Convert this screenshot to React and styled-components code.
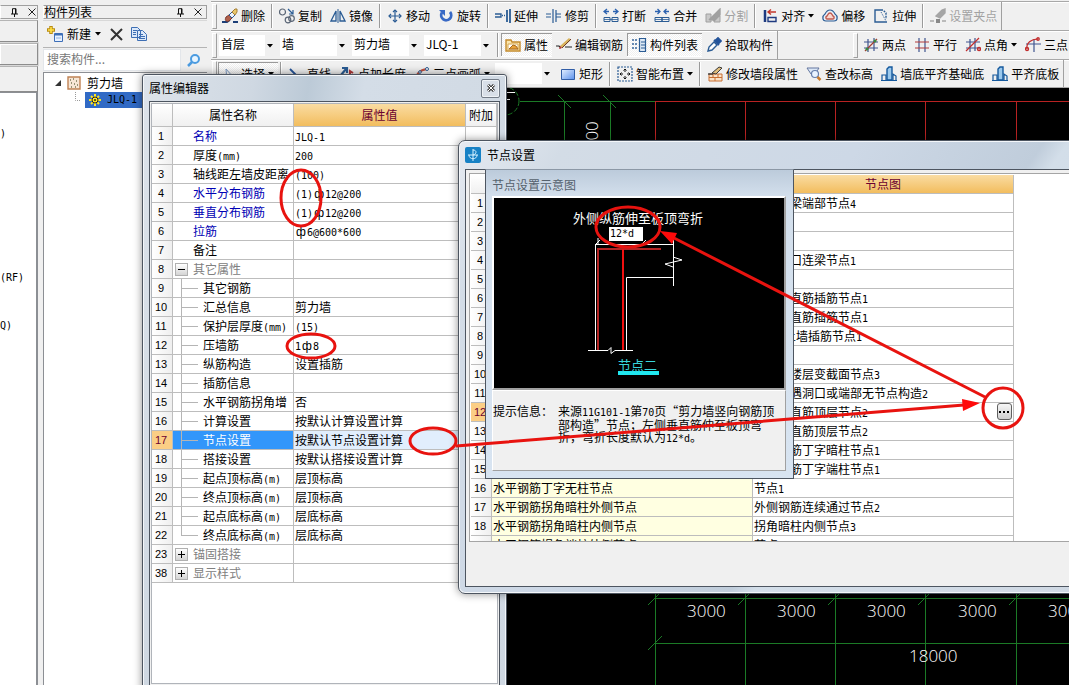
import React from "react";
import styled, { createGlobalStyle, css } from "styled-components";

const ui = '"Noto Sans CJK SC", "Liberation Sans", sans-serif';

const GlobalStyle = createGlobalStyle`
  * { box-sizing: border-box; }
  body { margin: 0; background: #f0f0f0; font: 12px/18px ${ui}; color: #000; text-spacing-trim: space-all; overflow: hidden; }
  button, input, select { font: inherit; color: inherit; }
  svg { display: block; flex: none; }
`;

/* ---------- shell ---------- */
const Shell = styled.div`
  position: relative;
  display: flex;
  height: 100vh;
  overflow: hidden;
  background: #f0f0f0;
`;
const Dock = styled.aside`
  display: flex;
  flex-direction: column;
  width: ${(p) => p.$width}px;
  flex: none;
  padding-top: 5px;
  margin-right: ${(p) => p.$gap}px;
`;
const DockTitle = styled.div`
  display: flex;
  align-items: center;
  height: 14px;
  padding-right: 4px;
  gap: 9px;
  border: 1px solid #a0a0a0;
  border-left-color: #fff;
  line-height: 12px;
`;
const DockName = styled.h2`
  flex: 1;
  margin: 0;
  font: inherit;
  white-space: nowrap;
`;
const GlyphButton = styled.button`
  display: block;
  padding: 0;
  border: 0;
  background: none;
`;
const Slot = styled.div`
  height: ${(p) => p.$height}px;
  border: 1px solid #8c8c8c;
  border-left: 0;
  border-top-color: #b4b4b4;
  margin-top: 1px;
  background: ${(p) => (p.$raised ? "#ececec" : "#f0f0f0")};
  ${(p) => p.$raised && css`box-shadow: inset 1px 1px #fff, 0 0 0 1px #d8d8d8;`}
`;
const SideList = styled.div`
  flex: 1;
  display: flex;
  flex-direction: column;
  background: #fff;
  border-right: 2px solid #8c8f94;
  border-top: 1px solid #8c8f94;
  padding-top: 32px;
  font: 10px/18px "DejaVu Sans Mono", monospace;
`;
const SideItem = styled.span`
  height: 18px;
  margin-bottom: ${(p) => p.$after}px;
  white-space: nowrap;
`;
const ListTools = styled.div`
  display: flex;
  align-items: center;
  height: 27px;
  margin-top: 1px;
  padding-left: 4px;
  border-top: 1px solid #d8d8d8;
`;
const PlainButton = styled.button`
  display: flex;
  align-items: center;
  gap: 4px;
  padding: 0;
  margin-right: ${(p) => p.$after || 0}px;
  border: 0;
  background: none;
  white-space: nowrap;
`;
const SearchBar = styled.div`
  display: flex;
  align-items: center;
  height: 25px;
  border-top: 1px solid #b4b4b4;
  gap: 5px;
`;
const SearchInput = styled.input`
  flex: 1;
  min-width: 0;
  height: 22px;
  padding: 0 3px 3px;
  border: 1px solid #e3e6ea;
  background: #fff;
  &::placeholder { color: #777; opacity: 1; }
`;
const Tree = styled.ul`
  flex: 1;
  margin: 0;
  padding: 1px 0 0;
  list-style: none;
  background: #fff;
  border: 1px solid #8c8f94;
  border-width: 1px 0 0 1px;
`;
const TreeRow = styled.li`
  display: flex;
  align-items: center;
  height: 17px;
  gap: 5px;
  padding-left: ${(p) => p.$indent}px;
`;
const TreeLabel = styled.span`
  display: flex;
  flex: 1;
  align-items: center;
  gap: 6px;
  height: 16px;
  padding-left: ${(p) => (p.$selected ? 4 : 0)}px;
  background: ${(p) => (p.$selected ? "#316ac5" : "none")};
`;

/* ---------- toolbars ---------- */
const Main = styled.main`
  flex: 1;
  min-width: 0;
  display: flex;
  flex-direction: column;
`;
const Strips = styled.div`
  border-top: 1px solid #a8a8a8;
  margin-top: 1px;
  background: #f0f0f0;
`;
const Strip = styled.div`
  display: flex;
  height: 29px;
  border-bottom: 1px solid #a8a8a8;
  box-shadow: inset 0 1px #fff;
  overflow: hidden;
  &:last-child { height: 28px; }
`;
const Bar = styled.div`
  display: flex;
  align-items: center;
  flex: none;
  margin-left: ${(p) => p.$offset || 0}px;
  border-right: 1px solid #a0a0a0;
  &::before {
    content: "";
    width: 3px;
    height: 23px;
    margin: 0 1px;
    border: 1px solid #a0a0a0;
    border-left-color: #fff;
    border-top-color: #fff;
  }
`;
const Tool = styled.button`
  display: flex;
  align-items: center;
  gap: 3px;
  height: 24px;
  padding: 0 4px;
  border: 1px solid transparent;
  border-width: 1px 0;
  white-space: nowrap;
  background: none;
  ${(p) => p.$pressed && css`
    border-color: #9a9a9a #fff #fff;
    box-shadow: inset 1px 0 #9a9a9a;
    background: repeating-conic-gradient(#f0f0f0 0 25%, #fff 0 50%) 0 0 / 2px 2px;
  `}
  &:disabled { color: #a2a2a2; }
`;
const Sep = styled.span`
  width: 2px;
  height: 24px;
  margin: 0 2px;
  border-left: 1px solid #9a9a9a;
  background: #fff;
`;
const Combo = styled.label`
  position: relative;
  display: block;
  width: ${(p) => p.$width}px;
  height: 21px;
  margin: 0 4px 0 1px;
  background: #fff;
  svg { position: absolute; right: 0; top: 0; pointer-events: none; }
`;
const ComboSelect = styled.select`
  appearance: none;
  display: block;
  width: 100%;
  height: 21px;
  padding: 0 10px 2px 2px;
  border: 0;
  background: #fff;
`;
const Canvas = styled.div`
  flex: 1;
  min-height: 0;
  background: #000;
`;

/* ---------- floating windows ---------- */
const Window = styled.section`
  position: absolute;
  display: flex;
  flex-direction: column;
  background: #d3dde8;
  border: 1px solid #4d5560;
  box-shadow: inset 0 0 0 1px #f4f7fa, 0 0 8px rgba(0, 0, 0, 0.45);
`;
const PropertyWindow = styled(Window)`
  left: 142px;
  top: 74px;
  bottom: -8px;
  width: 365px;
  padding: 0 6px 6px;
  border-radius: 3px;
  background: linear-gradient(100deg, #dde3ea 0, #cfd8e2 110px, #bccad7 165px, #d4dde7 220px, #cfd8e2 100%);
`;
const NodeWindow = styled(Window)`
  left: 458px;
  top: 140px;
  right: -24px;
  height: 454px;
  padding: 0 6px 6px;
  border-radius: 7px;
  background: linear-gradient(125deg, #e5eaf1 0, #d3dce6 90px, #cdd8e6 330px, #c0cddb 480px, #d3dee9 500px, #cfd8e3 100%);
`;
const TitleBar = styled.header`
  display: flex;
  align-items: center;
  flex: none;
  height: ${(p) => p.$height}px;
  gap: 6px;
`;
const Title = styled.h2`
  flex: 1;
  margin: 0;
  font: inherit;
`;
const CloseButton = styled.button`
  display: grid;
  place-items: center;
  width: 19px;
  height: 19px;
  padding: 0;
  border: 1px solid #737c88;
  border-radius: 2px;
  background: #d8dfe8;
  box-shadow: inset 0 0 0 1px #eef2f6;
`;
const PropertyBody = styled.div`
  flex: 1;
  border: 1px solid #4d5560;
  background: #fff;
  box-shadow: inset 0 0 0 1px #f0f0f0, inset 0 0 0 2px #b0b4ba;
  padding: 2px;
`;
const NodeBody = styled.div`
  flex: 1;
  min-height: 0;
  padding: 3px 0 0 3px;
  border: 1px solid #4d5560;
  background: #f0f0f0;
`;
const NodeGridBox = styled.div`
  height: 369px;
  overflow: hidden;
  padding: 1px 0 0 1px;
  border: 1px solid #a5a5a5;
  border-right: 0;
  background: #fff;
`;

/* ---------- grids ---------- */
const Grid = styled.table`
  table-layout: fixed;
  border-collapse: separate;
  border-spacing: 0;
  width: ${(p) => p.$width}px;
  line-height: 16px;
  white-space: nowrap;
`;
const Head = styled.th`
  height: ${(p) => p.$height}px;
  padding: 0;
  font-weight: normal;
  text-align: center;
  overflow: hidden;
  border: solid #bdbdbd;
  border-width: 0 1px 1px 0;
  color: ${(p) => (p.$active ? "#6b0030" : "#000")};
  background: ${(p) => (p.$active ? "linear-gradient(#fadca2, #f2bd5e)" : "linear-gradient(#fff, #f0f0f0)")};
`;
const Index = styled.th`
  height: 19px;
  padding: 0 2px 0 0;
  font: 11px/16px "Liberation Sans", sans-serif;
  border: solid #bdbdbd;
  border-width: 0 1px 1px 0;
  color: ${(p) => (p.$active ? "#6b0030" : "#000")};
  background: ${(p) => (p.$active ? "#fbce85" : "linear-gradient(90deg, #fff, #efefef)")};
`;
const Cell = styled.td`
  height: 19px;
  padding: 0 0 1px 1px;
  overflow: hidden;
  border: solid #bdbdbd;
  border-width: 0 1px 1px 0;
  background: ${(p) => p.$bg || "#fff"};
`;
const NameCell = styled.td`
  height: 19px;
  padding: 0;
  overflow: hidden;
  border: solid #bdbdbd;
  border-width: 0 1px 1px 0;
  color: ${(p) => p.$color};
  background: ${(p) => (p.$selected ? "#3296fa" : "#fff")};
`;
const NameLine = styled.div`
  display: flex;
  align-items: center;
  height: 18px;
  padding-left: ${(p) => p.$indent}px;
  gap: ${(p) => p.$gap}px;
`;
const Branch = styled.span`
  flex: none;
  width: 17px;
  height: 19px;
  background:
    linear-gradient(#b5b5b5, #b5b5b5) 0 9px / 17px 1px no-repeat,
    linear-gradient(#b5b5b5, #b5b5b5) 0 0 / 1px ${(p) => (p.$last ? 9 : 19)}px no-repeat;
`;
const Expander = styled.button`
  display: grid;
  place-items: center;
  flex: none;
  width: 13px;
  height: 13px;
  padding: 0;
  border: 1px solid #b0b0b0;
  background: linear-gradient(#fff, #d4d4d4);
`;
const Half = styled.span`
  font: 10px/12px "DejaVu Sans Mono", monospace;
`;
const Grade = styled.span`
  display: inline-block;
  width: 12px;
  text-align: center;
  font: 12px/12px "Liberation Sans", sans-serif;
`;
const ValueLine = styled.div`
  display: flex;
  align-items: center;
  justify-content: space-between;
  height: 17px;
`;
const MoreButton = styled.button`
  display: grid;
  place-items: center;
  width: 15px;
  height: 17px;
  margin-right: 1px;
  padding: 0;
  border: 1px solid #606060;
  border-radius: 3px;
  background: linear-gradient(#f6f6f6, #cfcfcf);
`;

/* ---------- preview popup ---------- */
const Popup = styled.section`
  position: absolute;
  left: 26px;
  top: 28px;
  width: 309px;
  height: 310px;
  padding: 0 7px 7px 6px;
  display: flex;
  flex-direction: column;
  border: 1px solid #4d5560;
  border-top-color: #8c98a6;
  background: linear-gradient(#bccbdb 0, #d3dfec 26px, #d8e4f1 100%);
`;
const PopupTitle = styled.h3`
  height: 26px;
  margin: 0;
  padding-top: 6px;
  font: inherit;
  color: #55616d;
`;
const Picture = styled.div`
  position: relative;
  height: 194px;
  border: 2px solid #a0a0a0;
  border-top-color: #fff;
  border-left-color: #fff;
  background: #000;
`;
const LengthInput = styled.input`
  position: absolute;
  left: 115px;
  top: 29px;
  width: 34px;
  height: 14px;
  padding: 0 1px;
  border: 0;
  background: #fff;
  font: 10px/14px "DejaVu Sans Mono", monospace;
`;
const Hint = styled.dl`
  flex: 1;
  display: flex;
  margin: 0;
  padding-top: 14px;
  line-height: 12px;
  white-space: nowrap;
  background: #f0f0f0;
  border: 1px solid #a0a0a0;
  border-top-color: #fff;
  border-left-color: #fff;
`;
const HintTerm = styled.dt`width: 65px;`;
const HintText = styled.dd`margin: 0;`;
const Marks = styled.svg`
  position: absolute;
  left: 0;
  top: 0;
  width: 100%;
  height: 100%;
  pointer-events: none;
`;

/* Half-width runs take the narrow fixed-pitch face; the steel grade sign fills a full cell. */
const Mixed = ({ children }) =>
  String(children)
    .split(/([\x20-\x7e]+|ф)/)
    .map((part, i) => {
      if (part === "ф") return <Grade key={i}>{part}</Grade>;
      return i % 2 ? <Half key={i}>{part}</Half> : part;
    });

/* ---------- icons ---------- */
const B = "#2b5c94";
const Svg = ({ children, w = 16, h = 16 }) => (
  <svg width={w} height={h} viewBox={`0 0 ${w} ${h}`} fill="none" stroke={B} strokeWidth="1.4" aria-hidden="true">{children}</svg>
);
const Caret = () => <svg width="6" height="4" viewBox="0 0 6 4" aria-hidden="true"><path d="M0 0h6L3 3.500z" fill="#000" /></svg>;
const Pin = () => <Svg w={9} h={9}><path d="M1 6h7M4.500 6v3M2.500 6V.7h3.500V6M5.500 1v5" stroke="#111" strokeWidth="1" /></Svg>;
const Cross = ({ size = 8 }) => <Svg w={size} h={size}><path d={`M.5 .5L${size - 0.5} ${size - 0.5}M${size - 0.5} .5L.5 ${size - 0.5}`} stroke="#222" strokeWidth="1" /></Svg>;

const icons = {
  erase: <><path d="M0 14h5l3-2M11 14h5" stroke="#1c3f78" strokeWidth="1.800" /><path d="M4 9l3-2 3 3-3 3c-2 1-5 0-3-4z" fill="#b0604c" stroke="#7c3a2e" strokeWidth="1" /><path d="M7 7l3-3 3 3-3 3z" fill="#eef3fa" stroke="#345b92" strokeWidth="1" /><path d="M10 4l3-3h2v3l-2 3z" fill="#e9c76a" stroke="#a57e35" strokeWidth="1" /></>,
  copy: <><circle cx="3.500" cy="4" r="3" stroke="#5b6676" strokeWidth="1.200" /><circle cx="9" cy="12" r="2.800" stroke="#5b6676" strokeWidth="1.200" /><circle cx="12.500" cy="10.500" r="2.800" stroke="#5b6676" strokeWidth="1.200" /><path d="M9 1l5 5M14 2v4h-4" strokeWidth="1.200" /></>,
  mirror: <><path d="M6 3v10H1zM10 3v10h5z" strokeWidth="1.300" /><path d="M8 1v14" strokeWidth="1" /></>,
  move: <><path d="M8 2v12M2 8h12" strokeWidth="1.200" /><path d="M6 4l2-2 2 2M6 12l2 2 2-2M4 6L2 8l2 2M12 6l2 2-2 2" strokeWidth="1.200" /></>,
  rotate: <><path d="M4 4.500a5 5 0 1 0 8-.5" stroke="#3869c5" strokeWidth="2.800" /><path d="M1 2h6v6z" fill="#3869c5" stroke="none" /></>,
  extend: <><path d="M0 6h6v3H0" strokeWidth="1.400" /><path d="M7 7.500h4" strokeDasharray="1 1" /><path d="M12 2v12M15 1v14" strokeWidth="1.800" /></>,
  trim: <><path d="M0 6h6M0 9h6M10 6h6M10 9h6" strokeDasharray="5 1" strokeWidth="1" /><path d="M7 1v14M10 2v12" strokeWidth="1.200" /></>,
  split: <><path d="M4 1L1 3.500 4 6M1 3.500h5M12 1l3 2.500L12 6M15 3.500h-5" stroke="#2d63b0" strokeWidth="1.300" /><path d="M1 9.500h6v4H1zM9 9.500h6v4H9z" strokeWidth="1" /><path d="M1 11.500h14" strokeWidth=".8" /></>,
  merge: <><path d="M1 3.500h5M3.500 1L6 3.500 3.500 6M15 3.500h-5M12.500 1L10 3.500 12.500 6" stroke="#2d63b0" strokeWidth="1.300" /><path d="M1 9.500h7v4H1zM8 9.500h7v4H8z" strokeWidth="1" /><path d="M1 11.500h14" strokeWidth=".8" /></>,
  cut: <><path d="M1 6h5v8H1zM9 8h6v6H9z" fill="#c9c9c9" stroke="#a0a0a0" strokeWidth="1" /><path d="M4 12L15 1v6L9 13" fill="#a0a0a0" stroke="#a0a0a0" /></>,
  align: <><path d="M3 2v12" stroke="#1e3a80" strokeWidth="2.500" /><path d="M6 9.500h8v4H6z" stroke="#1e3a80" /><path d="M6 4h8M9 1.500L6 4l3 2.500" stroke="#c2362b" /></>,
  offset: <><path d="M8 2c3 0 4 2 5 4 3 2 3 7-1 7H4c-4 0-4-5-1-7 1-2 2-4 5-4z" strokeWidth="1.200" fill="#e8eff8" /><path d="M8 5c2 0 2 2 3 3 2 1 1 3 0 3H5c-1 0-2-2 0-3 1-1 1-3 3-3z" stroke="#c05a4e" fill="#f8d7d0" /></>,
  stretch: <><path d="M8 2H2v12h12" /><path d="M8 2h2l3 3v6" strokeDasharray="2 1" /><path d="M8 4l5 9" strokeDasharray="1 1" strokeWidth="1" /></>,
  grip: <><path d="M0 13h4M12 13h4" stroke="#a8a8a8" /><path d="M6 8l6-6 3-1v4l-5 5z" fill="#a5a5a5" stroke="#a5a5a5" /><path d="M6 11h4v4H6z" fill="#888" stroke="none" /></>,
  props: <><path d="M1 3h5l1 2h8v9H1z" fill="#fbe6ae" stroke="#c48a2c" /><path d="M3 7h10v6H3z" fill="#fff" stroke="#d5a753" strokeWidth="1" /><path d="M4 12l4-4 3 1 2 3z" fill="#e8a23a" stroke="#a96b1e" strokeWidth="1" /></>,
  rebar: <><path d="M0 9h3l2 2M9 10h7" stroke="#222" strokeWidth="1.200" /><path d="M5 10L14 2" stroke="#d8b35d" strokeWidth="3" /><path d="M6 11l9-9" stroke="#703d2a" strokeWidth="1" /><path d="M3 12l3-1-2-2z" fill="#b33" stroke="none" /></>,
  list: <><path d="M2 2v12M5 2v12" strokeDasharray="2 2" /><path d="M8.500 1.500h6v13h-6z" fill="#dfeaf6" strokeWidth="1.200" /><path d="M10 5h4M10 8h4M10 11h4" strokeWidth="1" /></>,
  dropper: <><path d="M2 14l1-4 5-5 3 3-5 5z" fill="#fff" /><path d="M8 3l5 5M9 4l3-3 3 3-3 3z" fill="#24549a" stroke="#24549a" strokeWidth="1.800" /></>,
  two: <><path d="M5 2v13M11 1v13M1 5h14M1 11h14" stroke="#40558f" strokeWidth="1.200" /><path d="M2 14L14 2" stroke="#a23d31" strokeWidth="1.200" /><circle cx="4" cy="12" r="1.500" fill="#398a3e" stroke="none" /><circle cx="12" cy="4" r="1.500" fill="#398a3e" stroke="none" /></>,
  parallel: <><path d="M5 1v14M11 1v14" stroke="#40558f" strokeWidth="1.200" /><path d="M1 5h14M1 11h14" stroke="#b23a3a" strokeWidth="1.200" /></>,
  angle: <><path d="M5 2v13M10 1v13M1 5h14M1 11h14" stroke="#40558f" strokeWidth="1.200" /><path d="M1 14L14 1" stroke="#c22e2e" strokeWidth="1.200" /><circle cx="14" cy="12" r="1.500" stroke="#c22e2e" /></>,
  three: <><path d="M9 2v13M1 7h15" stroke="#40558f" strokeWidth="1.200" /><path d="M2 12C1 6 6 2 13 2" stroke="#c22e2e" strokeWidth="1.200" /><circle cx="2" cy="12" r="1.500" stroke="#c22e2e" /><circle cx="13" cy="2" r="1.200" stroke="#c22e2e" /></>,
  select: <path d="M4 3l7 8H8l-3 4z" stroke="#7e9cc4" strokeWidth="1" fill="#fff" />,
  line: <path d="M2 3l11 11" stroke="#24549a" strokeWidth="1.800" />,
  length: <><path d="M2 9L7 3M3 2h5v5" strokeWidth="2.200" /><path d="M11 13V5l3 2" stroke="#b23a3a" strokeWidth="2" /></>,
  arc: <><path d="M2 14C2 8 6 4 13 3" stroke="#c0513f" strokeWidth="1.800" /><circle cx="13" cy="3" r="1.500" fill="#fff" strokeWidth="1" /><circle cx="6" cy="6" r="1.300" fill="#fff" strokeWidth="1" /></>,
  rect: <><defs><linearGradient id="blueRect" x1="0" y1="0" x2="1" y2="1"><stop stopColor="#e5f0ff" /><stop offset="1" stopColor="#5b91ed" /></linearGradient></defs><path d="M1.500 3.500h13v10h-13z" fill="url(#blueRect)" stroke="#315da6" strokeWidth="1" /></>,
  smart: <><path d="M1 1h14v14H1z" strokeDasharray="2 1" strokeWidth="1.200" /><path d="M8 3v3M8 10v3M3 8h3M10 8h3M6.500 4.500L8 3l1.500 1.500M6.500 11.500L8 13l1.500-1.500M4.500 6.500L3 8l1.500 1.500M11.500 6.500L13 8l-1.500 1.500" stroke="#111" strokeWidth="1" /></>,
  brick: <><path d="M2 8h13v7H2zM2 11.500h13M6 8v3.500M11 8v3.500M8 11.500V15" fill="#fae3c8" stroke="#c86f32" strokeWidth="1" /><path d="M1 8h5" stroke="#3b3b3b" /><path d="M5 7l7-6 3 1-6 6z" fill="#e0bd7b" stroke="#3b3b3b" strokeWidth="1" /></>,
  level: <><path d="M1 2h12l-4 6H5z" fill="#dce8f7" stroke="#6577a0" strokeWidth="1" /><circle cx="9" cy="8" r="3.500" fill="#e9f3ff" stroke="#667eaa" strokeWidth="1.200" /><path d="M11.500 11l3 3" stroke="#c87b2d" strokeWidth="2.500" /></>,
  wall: <><path d="M6 14V3l2-2h3v13z" fill="#9bc9ed" stroke="#14589c" /><path d="M1 14V9h4v5M12 14V8l3 2v4M0 14.500h16" stroke="#14589c" strokeWidth="1.200" /></>,
};
const Icon = ({ name }) => <Svg>{icons[name]}</Svg>;

const ToolItem = ({ icon, label, caret, pressed, disabled }) => (
  <Tool type="button" $pressed={pressed} aria-pressed={pressed} disabled={disabled}>
    <Icon name={icon} />
    <span>{label}</span>
    {caret && <Caret />}
  </Tool>
);
const Dropdown = ({ label, value, width }) => (
  <Combo $width={width}>
    <ComboSelect aria-label={label} defaultValue={value}><option>{value}</option></ComboSelect>
    <svg width="10" height="21" viewBox="0 0 10 21" aria-hidden="true"><path d="M0 0h10v21H0z" fill="#f0f0f0" /><path d="M2 9h6l-3 3.500z" fill="#000" /></svg>
  </Combo>
);

const TopBars = () => (
  <Strips>
    <Strip>
      <Bar>
        <ToolItem icon="erase" label="删除" /><Sep />
        <ToolItem icon="copy" label="复制" /><ToolItem icon="mirror" label="镜像" /><Sep />
        <ToolItem icon="move" label="移动" /><ToolItem icon="rotate" label="旋转" /><Sep />
        <ToolItem icon="extend" label="延伸" /><ToolItem icon="trim" label="修剪" /><Sep />
        <ToolItem icon="split" label="打断" /><ToolItem icon="merge" label="合并" /><ToolItem icon="cut" label="分割" disabled /><Sep />
        <ToolItem icon="align" label="对齐" caret /><ToolItem icon="offset" label="偏移" /><ToolItem icon="stretch" label="拉伸" /><Sep />
        <ToolItem icon="grip" label="设置夹点" disabled />
      </Bar>
    </Strip>
    <Strip>
      <Bar>
        <Dropdown label="楼层" value="首层" width={56} />
        <Dropdown label="构件类型" value="墙" width={67} />
        <Dropdown label="构件种类" value="剪力墙" width={67} />
        <Dropdown label="构件" value="JLQ-1" width={67} />
        <Sep />
        <ToolItem icon="props" label="属性" pressed />
        <ToolItem icon="rebar" label="编辑钢筋" />
        <ToolItem icon="list" label="构件列表" pressed />
        <ToolItem icon="dropper" label="拾取构件" />
      </Bar>
      <Bar $offset={74}>
        <ToolItem icon="two" label="两点" /><ToolItem icon="parallel" label="平行" />
        <ToolItem icon="angle" label="点角" caret /><ToolItem icon="three" label="三点" />
      </Bar>
    </Strip>
    <Strip>
      <Bar>
        <ToolItem icon="select" label="选择" pressed caret /><Sep />
        <ToolItem icon="line" label="直线" /><ToolItem icon="length" label="点加长度" />
        <ToolItem icon="arc" label="三点画弧" caret />
        <Dropdown label="绘制方式" value="" width={57} />
        <ToolItem icon="rect" label="矩形" /><Sep />
        <ToolItem icon="smart" label="智能布置" caret /><Sep />
        <ToolItem icon="brick" label="修改墙段属性" /><ToolItem icon="level" label="查改标高" />
        <ToolItem icon="wall" label="墙底平齐基础底" /><ToolItem icon="wall" label="平齐底板" />
      </Bar>
    </Strip>
  </Strips>
);

/* ---------- drawing area ---------- */
const axes = [655, 745, 835, 925, 1016];
const Drawing = () => (
  <svg width="100%" height="100%" aria-hidden="true">
    <g transform="translate(-211 -88)" fill="none" strokeWidth="1">
      <g stroke="#1b7a26">
        <circle cx="505" cy="101" r="14" strokeDasharray="5 2" />
        <path d="M520 101.500H655M564.500 101v40M610.500 101v40M558 95l13 13M603 95l13 13" />
        <path d="M655 598.500H1400M655 643.500H1400M648 650l14-14" />
        {axes.map((x) => <path key={x} d={`M${x}.5 590V800M${x - 7} 605l14-14`} />)}
      </g>
      <g stroke="#b92222">
        <path d="M655 101.500H1400" />
        {axes.map((x) => <path key={x} d={`M${x}.5 101v45`} />)}
      </g>
      <path d="M507 92.500h8M507 99.500h3" stroke="#fff" />
      <g fill="#fff" fontFamily='"Open Sans", sans-serif' fontWeight="300" fontSize="17">
        {[687, 777, 867, 958, 1048].map((x) => <text key={x} x={x} y="617">3000</text>)}
        <text x="909" y="662">18000</text>
        <text transform="translate(598 160) rotate(-90)">3000</text>
      </g>
    </g>
  </svg>
);

/* ---------- data ---------- */
const BLUE = "#0000b4";
const GREY = "#808080";
const properties = [
  { n: 1, name: "名称", value: "JLQ-1", color: BLUE },
  { n: 2, name: "厚度(mm)", value: "200" },
  { n: 3, name: "轴线距左墙皮距离", value: "(100)" },
  { n: 4, name: "水平分布钢筋", value: "(1)ф12@200", color: BLUE },
  { n: 5, name: "垂直分布钢筋", value: "(1)ф12@200", color: BLUE },
  { n: 6, name: "拉筋", value: "ф6@600*600", color: BLUE },
  { n: 7, name: "备注", value: "" },
  { n: 8, name: "其它属性", value: "", group: "open" },
  { n: 9, name: "其它钢筋", value: "", child: true },
  { n: 10, name: "汇总信息", value: "剪力墙", child: true },
  { n: 11, name: "保护层厚度(mm)", value: "(15)", child: true },
  { n: 12, name: "压墙筋", value: "1ф8", child: true },
  { n: 13, name: "纵筋构造", value: "设置插筋", child: true },
  { n: 14, name: "插筋信息", value: "", child: true },
  { n: 15, name: "水平钢筋拐角增", value: "否", child: true },
  { n: 16, name: "计算设置", value: "按默认计算设置计算", child: true },
  { n: 17, name: "节点设置", value: "按默认节点设置计算", child: true, selected: true },
  { n: 18, name: "搭接设置", value: "按默认搭接设置计算", child: true },
  { n: 19, name: "起点顶标高(m)", value: "层顶标高", child: true },
  { n: 20, name: "终点顶标高(m)", value: "层顶标高", child: true },
  { n: 21, name: "起点底标高(m)", value: "层底标高", child: true },
  { n: 22, name: "终点底标高(m)", value: "层底标高", child: true, last: true },
  { n: 23, name: "锚固搭接", value: "", group: "closed" },
  { n: 38, name: "显示样式", value: "", group: "closed" },
];
const nodes = [
  ["", "楼层连梁端部节点4"], ["", ""], ["", ""], ["", "双洞洞口连梁节点1"], ["", ""],
  ["", "墙身垂直筋插筋节点1"], ["", "墙身垂直筋插筋节点1"], ["", "人防/土墙插筋节点1"], ["", ""],
  ["", "垂直筋楼层变截面节点3"], ["", "水平筋遇洞口或端部无节点构造2"],
  ["", "墙身垂直筋顶层节点2"], ["", "墙身垂直筋顶层节点2"],
  ["", "墙水平筋丁字暗柱节点1"], ["", "墙水平筋丁字端柱节点1"],
  ["水平钢筋丁字无柱节点", "节点1"],
  ["水平钢筋拐角暗柱外侧节点", "外侧钢筋连续通过节点2"],
  ["水平钢筋拐角暗柱内侧节点", "拐角暗柱内侧节点3"],
  ["水平钢筋拐角端柱外侧节点", "节点3"],
];

const PropertyRow = ({ row }) => {
  const color = row.selected ? "#fff" : row.group ? GREY : row.color || "#000";
  return (
    <tr>
      <Index scope="row" $active={row.selected}>{row.n}</Index>
      <NameCell $color={color} $selected={row.selected}>
        <NameLine $indent={row.group ? 2 : row.child ? 8 : 20} $gap={5}>
          {row.group && (
            <Expander type="button" aria-label={row.name} aria-expanded={row.group === "open"}>
              <Svg w={9} h={9}><path d={row.group === "open" ? "M1 4.500h7" : "M1 4.500h7M4.500 1v7"} stroke="#000" strokeWidth="1" /></Svg>
            </Expander>
          )}
          {row.child && <Branch $last={row.last} />}
          <span><Mixed>{row.name}</Mixed></span>
        </NameLine>
      </NameCell>
      <Cell $bg={row.selected && "#e1eefd"}><Mixed>{row.value}</Mixed></Cell>
      <Cell />
    </tr>
  );
};

const NodePicture = () => (
  <Picture>
    <svg width="290" height="190" aria-hidden="true">
      <g transform="translate(-494 -198)" fill="none" stroke="#fff">
        <path d="M595.500 350V244.500H673.500M673.500 240v46M626.500 350V277.500H673M588 350.500h20l3-3v6l4-3h18M673 257l9 3-17 4 8 3M598 238v6M595 245l5-5M641 245l5-5" />
        <path d="M598 350V249h63" stroke="#b32424" strokeWidth="2" />
        <path d="M623 350V249" stroke="#f01010" strokeWidth="2" />
        <path d="M618 373h41" stroke="#20e8f0" strokeWidth="4" />
        <g stroke="none" fontSize="13" fontFamily='"Noto Sans CJK SC", sans-serif'>
          <text x="573" y="223" fill="#fff">外侧纵筋伸至板顶弯折</text>
          <text x="618" y="370" fill="#38d4dc">节点二</text>
        </g>
      </g>
    </svg>
    <LengthInput aria-label="弯折长度" defaultValue="12*d" />
  </Picture>
);

export default function App() {
  return (
    <Shell lang="zh-CN">
      <GlobalStyle />
      <Dock $width={38} $gap={5}>
        <DockTitle>
          <DockName />
          <GlyphButton type="button" aria-label="固定"><Pin /></GlyphButton>
          <GlyphButton type="button" aria-label="关闭"><Cross /></GlyphButton>
        </DockTitle>
        <Slot $height={22} /><Slot $height={22} $raised /><Slot $height={26} />
        <SideList>
          <SideItem $after={126}>)</SideItem>
          <SideItem $after={30}>(RF)</SideItem>
          <SideItem $after={0}>Q)</SideItem>
        </SideList>
      </Dock>

      <Dock $width={164} $gap={4}>
        <DockTitle>
          <DockName>构件列表</DockName>
          <GlyphButton type="button" aria-label="固定"><Pin /></GlyphButton>
          <GlyphButton type="button" aria-label="关闭"><Cross /></GlyphButton>
        </DockTitle>
        <ListTools>
          <PlainButton type="button" $after={9}>
            <Svg><path d="M4 0v8M0 4h8" stroke="#b98c10" strokeWidth="3.500" /><path d="M4 1v6M1 4h6" stroke="#ffe14a" strokeWidth="1.600" /><path d="M7.500 7.500h8v8h-8z" fill="#e7f1ff" stroke="#3d6fb8" strokeWidth="1" /><path d="M8 8.500h7" stroke="#3d6fb8" strokeWidth="2" /><path d="M9 12h5" stroke="#8fb2e2" strokeWidth="1" /></Svg>
            <span>新建</span><Caret />
          </PlainButton>
          <PlainButton type="button" aria-label="删除构件" $after={8}><Svg w={13} h={13}><path d="M1 1l11 11M12 1L1 12" stroke="#333" strokeWidth="2" /></Svg></PlainButton>
          <PlainButton type="button" aria-label="复制构件"><Svg><path d="M.5 1.500h6l3 3v7h-9zM6.500 4.500h5l4 4v6h-9z" fill="#dce9fa" stroke="#3e6fb4" strokeWidth="1" /><path d="M2 4.500h4M2 6.500h3M2 8.500h3M8 8.500h4M8 10.500h6M8 12.500h6" stroke="#3e6fb4" strokeWidth="1" /></Svg></PlainButton>
        </ListTools>
        <SearchBar>
          <SearchInput type="search" aria-label="搜索构件" placeholder="搜索构件..." />
          <PlainButton type="button" aria-label="搜索" $after={5}><Svg><circle cx="9" cy="7" r="4" stroke="#4b9be0" strokeWidth="2" fill="#e8f5ff" /><path d="M6 10l-4 4" stroke="#4b9be0" strokeWidth="2.500" /></Svg></PlainButton>
        </SearchBar>
        <Tree>
          <TreeRow $indent={10}>
            <Svg w={8} h={8}><path d="M7 1v6H1z" fill="#333" stroke="none" /></Svg>
            <TreeLabel>
              <Svg w={14} h={14}><path d="M1 1h12v12H1z" fill="#f7e6d5" stroke="#bf8254" /><path d="M3 4h1M6 3h1M9 5h1M4 7h1M7 8h1M10 9h1M4 11h1M8 11h1" stroke="#775" /></Svg>
              剪力墙
            </TreeLabel>
          </TreeRow>
          <TreeRow $indent={31}>
            <Svg w={5} h={16}><path d="M.5 0v8.500H5" stroke="#999" strokeWidth="1" strokeDasharray="1 1" /></Svg>
            <TreeLabel $selected>
              <Svg w={12} h={12}><path d="M6 0v12M0 6h12M2 2l8 8M10 2l-8 8" stroke="#ffe51f" strokeWidth="2" /><circle cx="6" cy="6" r="3" fill="#ffe51f" stroke="#222" strokeWidth="1" /><circle cx="6" cy="6" r="1" fill="#222" stroke="none" /></Svg>
              <Mixed>JLQ-1</Mixed>
            </TreeLabel>
          </TreeRow>
        </Tree>
      </Dock>

      <Main>
        <TopBars />
        <Canvas><Drawing /></Canvas>
      </Main>

      <PropertyWindow aria-label="属性编辑器">
        <TitleBar $height={26}>
          <Title>属性编辑器</Title>
          <CloseButton type="button" aria-label="关闭"><Svg w={8} h={8}><path d="M1 1l6 6M7 1L1 7" stroke="#444" strokeWidth="3" /><path d="M1 1l6 6M7 1L1 7" stroke="#fff" strokeWidth="1" /></Svg></CloseButton>
        </TitleBar>
        <PropertyBody>
          <Grid $width={345}>
            <colgroup><col width="21" /><col width="121" /><col width="172" /><col width="31" /></colgroup>
            <thead>
              <tr><Head $height={23} /><Head scope="col">属性名称</Head><Head scope="col" $active>属性值</Head><Head scope="col">附加</Head></tr>
            </thead>
            <tbody>{properties.map((row) => <PropertyRow key={row.n} row={row} />)}</tbody>
          </Grid>
        </PropertyBody>
      </PropertyWindow>

      <NodeWindow aria-label="节点设置">
        <TitleBar $height={28}>
          <Svg w={16} h={16}><rect width="16" height="16" rx="2" fill="#1681c5" stroke="none" /><path d="M8 2v12M3 8h10M8 3c4 0 4 4 0 5M4 8c0 5 8 5 8 0" stroke="#d4f0ff" strokeWidth="1" /></Svg>
          <Title>节点设置</Title>
        </TitleBar>
        <NodeBody>
          <NodeGridBox>
            <Grid $width={543}>
              <colgroup><col width="21" /><col width="261" /><col width="261" /></colgroup>
              <thead><tr><Head $height={19} /><Head /><Head scope="col" $active>节点图</Head></tr></thead>
              <tbody>
                {nodes.map(([name, value], i) => (
                  <tr key={i}>
                    <Index scope="row" $active={i === 11}>{i + 1}</Index>
                    <Cell $bg="#ffffe1"><Mixed>{name}</Mixed></Cell>
                    <Cell>
                      <ValueLine>
                        <span><Mixed>{value}</Mixed></span>
                        {i === 11 && <MoreButton type="button" aria-label="选择节点图"><Svg w={11} h={2}><path d="M0 1h2M4 1h2M8 1h2" stroke="#000" strokeWidth="2" /></Svg></MoreButton>}
                      </ValueLine>
                    </Cell>
                  </tr>
                ))}
              </tbody>
            </Grid>
          </NodeGridBox>
        </NodeBody>
        <Popup aria-label="节点设置示意图">
          <PopupTitle>节点设置示意图</PopupTitle>
          <NodePicture />
          <Hint>
            <HintTerm>提示信息：</HintTerm>
            <HintText>
              <Mixed>来源11G101-1第70页“剪力墙竖向钢筋顶</Mixed><br />
              <Mixed>部构造”节点；左侧垂直筋伸至板顶弯</Mixed><br />
              <Mixed>折，弯折长度默认为12*d。</Mixed>
            </HintText>
          </Hint>
        </Popup>
      </NodeWindow>

      <Marks aria-hidden="true">
        <g fill="none" stroke="#e8130f" strokeWidth="3">
          <ellipse cx="301" cy="198" rx="20" ry="28" />
          <ellipse cx="311" cy="346" rx="24" ry="12" />
          <ellipse cx="433" cy="441" rx="23" ry="13" />
          <ellipse cx="628" cy="227" rx="32" ry="20" />
          <circle cx="1003" cy="408" r="20" />
          <path d="M456 446L964 405M985 397L674 238" />
        </g>
        <path d="M980 403l-18-4 1 12zM660 231l17 2-5 11z" fill="#ff0a0a" />
      </Marks>
    </Shell>
  );
}
